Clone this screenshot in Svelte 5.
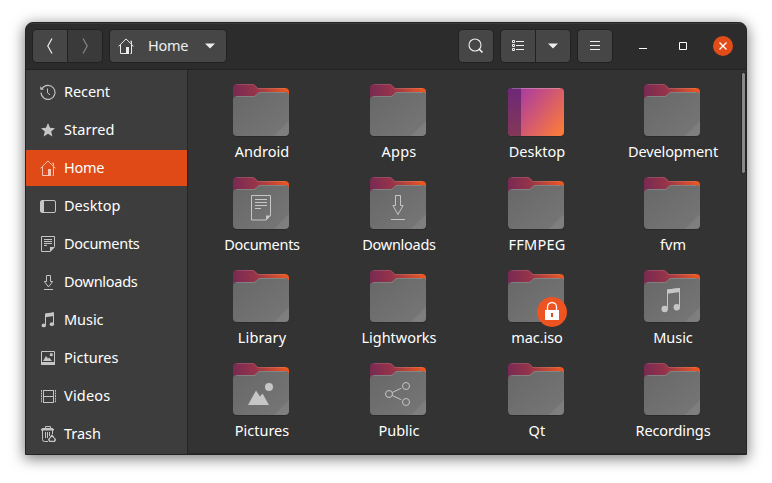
<script>
  const places = [
    { name: 'Recent', w: 46 },
    { name: 'Starred', w: 50.5 },
    { name: 'Home', w: 40 },
    { name: 'Desktop', w: 56.5 },
    { name: 'Documents', w: 75.5 },
    { name: 'Downloads', w: 73.5 },
    { name: 'Music', w: 39.5 },
    { name: 'Pictures', w: 54.5 },
    { name: 'Videos', w: 46.5 },
    { name: 'Trash', w: 37 }
  ];

  const folders = [
    { name: 'Android', w: 54.5 },
    { name: 'Apps', w: 35 },
    { name: 'Desktop', w: 56.5 },
    { name: 'Development', w: 90 },
    { name: 'Documents', w: 75.5 },
    { name: 'Downloads', w: 73.5 },
    { name: 'FFMPEG', w: 57 },
    { name: 'fvm', w: 26 },
    { name: 'Library', w: 48.5 },
    { name: 'Lightworks', w: 75 },
    { name: 'mac.iso', w: 51.5 },
    { name: 'Music', w: 39.5 },
    { name: 'Pictures', w: 54.5 },
    { name: 'Public', w: 41 },
    { name: 'Qt', w: 17 },
    { name: 'Recordings', w: 75 }
  ];

  // Tracks a label so that it takes up the given width.
  function fit(node, width) {
    const natural = node.getBoundingClientRect().width;
    const gap = (width - natural) / node.textContent.length;
    node.style.letterSpacing = gap.toFixed(3) + 'px';
  }
</script>

{#snippet house()}
  <svg class="icon" width="16" height="16" viewBox="0 0 16 16" fill="none" stroke="currentColor">
    <path d="M.5 8.4 8 .9l7.5 7.5M2.5 7v8.5h8M13.5 7v8.5h-1M13.5 5.8V3.2h-1.2" />
    <path d="M8 9h3v7H8z" fill="currentColor" stroke="none" />
  </svg>
{/snippet}

{#snippet placeIcon(name)}
  {#if name === 'Home'}
    {@render house()}
  {:else}
    <svg class="icon" width="16" height="16" viewBox="0 0 16 16" fill="none" stroke="currentColor">
      {#if name === 'Recent'}
        <path d="M2.1 4.6A7 7 0 1 1 1 8.6" stroke-width="1.1" />
        <path d="M.3 2.2v3.5h3.6z" fill="currentColor" stroke="none" />
        <path d="M7.5 4.500v4.300l2.500 2" />
      {:else if name === 'Starred'}
        <path d="m8 1 2 4.800 5 .4-3.800 3.300 1.200 5L8 11.800l-4.400 2.700 1.200-5L1 6.200l5-.4z" fill="currentColor" stroke="none" />
      {:else if name === 'Desktop'}
        <rect x=".5" y="2.5" width="15" height="12" rx="1.5" />
        <path d="M1 3h3v11H1z" fill="currentColor" stroke="none" />
      {:else if name === 'Documents'}
        <path d="M1.5.5h13v10l-4.500 5H1.500zM4 3.500h8M4 5.500h8M4 7.500h8M4 9.500h3" />
        <path d="M10 11h5l-5 5z" fill="currentColor" stroke="none" />
      {:else if name === 'Downloads'}
        <path d="M6.500 1.500h4v6h2.100L8.500 13 4.400 7.500h2.100zM4 15.500h9" />
      {:else if name === 'Music'}
        <path d="M5.500 13V2l8-1.200v11" />
        <path d="M5 1.700 14 .4V4L5 5.200z" fill="currentColor" stroke="none" />
        <ellipse cx="3.800" cy="13.400" rx="2.200" ry="1.900" fill="currentColor" stroke="none" />
        <ellipse cx="11.900" cy="12.200" rx="2.200" ry="1.900" fill="currentColor" stroke="none" />
      {:else if name === 'Pictures'}
        <path d="M1.500 1.500h13v13h-13z" />
        <path d="M1 12h14v3H1zM3 11l3-5 2 2.500 1.200-1L12 11z" fill="currentColor" stroke="none" />
        <circle cx="11.300" cy="4.700" r="1.600" fill="currentColor" stroke="none" />
      {:else if name === 'Videos'}
        <path d="M3.500 2v13M13.500 2v13M3.500 2.500h10M3.500 8.500h10M3.500 14.500h10" />
        <path d="M1.500 2v13M15.500 2v13" stroke-dasharray="1.800 .8" />
      {:else}
        <path d="M5.500 2.500v-2h5v2" />
        <path d="M1 4.500h13V3.300L12.500 2h-10L1 3.300z" fill="currentColor" stroke="none" />
        <path d="M2.500 4v9.500q0 2 2 2H8M12.500 4v4M5.500 6v6M7.500 6v6M9.500 6v4" />
        <path d="m9.700 12-.9 1.800 1 1.600h4.600l1-1.600-1-1.800M10 11.800l2-2.500 2 2.500" stroke-width="1.400" />
      {/if}
    </svg>
  {/if}
{/snippet}

{#snippet folderArt(name)}
  <svg class="folder" width="56" height="53" viewBox="0 0 56 53">
    {#if name === 'Desktop'}
      <rect y="5" width="56" height="48" rx="4" fill="#1f1f1f" opacity=".35" />
      <rect y="4" width="56" height="48" rx="4" fill="url(#desk)" />
      <path d="M13 4H4a4 4 0 0 0-4 4v40a4 4 0 0 0 4 4h9z" fill="url(#dock)" />
      <path d="M4 4.500h48" stroke="#fff" opacity=".25" />
    {:else}
      <path d="M0 12h56v37a4 4 0 0 1-4 4H4a4 4 0 0 1-4-4z" fill="#1f1f1f" opacity=".4" />
      <path d="M4 0h15.500q1.500 0 2.400 1L25 4h27a4 4 0 0 1 4 4v20H0V4a4 4 0 0 1 4-4z" fill="url(#back)" />
      <path d="M3.500.5h16q1.200 0 2 .8l3.300 3.200H52" fill="none" stroke="#fff" opacity=".13" />
      <path d="M4 12h16.500q1.300 0 2.200-.9l2.200-2.200q.9-.9 2.200-.9H52a4 4 0 0 1 4 4v36a4 4 0 0 1-4 4H4a4 4 0 0 1-4-4V16a4 4 0 0 1 4-4z" fill="url(#front)" />
      <path d="M3.500 12.500h17q1.500 0 2.500-1l2.100-2.100q.9-.9 2.200-.9H52.500" fill="none" stroke="#fff" opacity=".16" />
      <path d="M56 37v11a4 4 0 0 1-4 4H41z" fill="#fff" opacity=".07" />
      <g fill="none" stroke="#c6c6c6">
        {#if name === 'Documents'}
          <path d="M18.500 18.500h19v20l-4.500 4.500H18.500zM22 22.500h12M22 25.500h12M22 28.500h12M22 31.500h6" />
          <path d="M33 38.500h5l-5 5z" fill="#c6c6c6" stroke="none" />
        {:else if name === 'Downloads'}
          <path d="M25.500 18.500h5v10h2.600L28 37.500l-5.100-9h2.600zM21 42.500h14" />
        {:else if name === 'Music'}
          <path d="M23.500 39V20l12-1.500v18" />
          <path d="m23 19.500 13-1.600v4.200l-13 1.700z" fill="#c6c6c6" stroke="none" />
          <circle cx="20.700" cy="39" r="3.200" fill="#c6c6c6" stroke="none" />
          <circle cx="32.800" cy="37.200" r="3.200" fill="#c6c6c6" stroke="none" />
        {:else if name === 'Pictures'}
          <path d="m15 42 8-14.500 4 6 2.500-3L36 42z" fill="#c6c6c6" stroke="none" />
          <circle cx="36" cy="24" r="4" fill="#c6c6c6" stroke="none" />
        {:else if name === 'Public'}
          <circle cx="19" cy="31" r="3.500" />
          <circle cx="36" cy="23" r="3.500" />
          <circle cx="36" cy="39" r="3.500" />
          <path d="m22.200 29.500 9-4.200M22.200 32.500l9 4.200" />
        {/if}
      </g>
    {/if}
  </svg>
{/snippet}

<svg class="defs" width="0" height="0">
  <defs>
    <linearGradient id="back" gradientUnits="userSpaceOnUse" x1="0" y1="14" x2="56" y2="6">
      <stop offset="0" stop-color="#772953" />
      <stop offset=".4" stop-color="#96344a" />
      <stop offset="1" stop-color="#f0591f" />
    </linearGradient>
    <linearGradient id="front" x1="0" y1="0" x2="1" y2="1">
      <stop offset="0" stop-color="#676767" />
      <stop offset="1" stop-color="#777" />
    </linearGradient>
    <linearGradient id="desk" gradientUnits="userSpaceOnUse" x1="9" y1="6" x2="56" y2="44">
      <stop offset="0" stop-color="#a53aa4" />
      <stop offset=".5" stop-color="#d15872" />
      <stop offset="1" stop-color="#f97a3c" />
    </linearGradient>
    <linearGradient id="dock" gradientUnits="userSpaceOnUse" x1="0" y1="4" x2="0" y2="52">
      <stop offset="0" stop-color="#6d2878" />
      <stop offset="1" stop-color="#833857" />
    </linearGradient>
  </defs>
</svg>

<div class="desktop">
  <div class="window">
    <header>
      <div class="group">
        <button aria-label="Back">
          <svg width="8" height="18" viewBox="0 0 8 18" fill="none" stroke="currentColor" stroke-width="1.200"><path d="M6 1.500 1.800 9 6 16.500" /></svg>
        </button>
        <button class="off" aria-label="Forward">
          <svg width="8" height="18" viewBox="0 0 8 18" fill="none" stroke="currentColor" stroke-width="1.200"><path d="M2 1.500 6.200 9 2 16.500" /></svg>
        </button>
      </div>
      <div class="group path">
        <button>
          {@render house()}
          <span class="where"><span use:fit={40}>Home</span></span>
          <svg width="10" height="6" viewBox="0 0 10 6" fill="currentColor"><path d="M0 .500h10L5 5.500z" /></svg>
        </button>
      </div>
      <div class="space"></div>
      <div class="group">
        <button aria-label="Search">
          <svg width="16" height="16" viewBox="0 0 16 16" fill="none" stroke="currentColor"><circle cx="7" cy="7" r="6" stroke-width="1.100" /><path d="m11 11 3.500 3.500" stroke-width="1.700" /></svg>
        </button>
      </div>
      <div class="group views">
        <button aria-label="List view">
          <svg width="12" height="12" viewBox="0 0 12 12" fill="none" stroke="currentColor"><path d="M.500.500h2v2h-2zM.500 4.500h2v2h-2zM.500 8.500h2v2h-2zM4 1.500h8M4 5.500h8M4 9.500h8" /></svg>
        </button>
        <button aria-label="View options">
          <svg width="10" height="6" viewBox="0 0 10 6" fill="currentColor"><path d="M0 .500h10L5 5.500z" /></svg>
        </button>
      </div>
      <div class="group menu">
        <button aria-label="Menu">
          <svg width="10" height="10" viewBox="0 0 10 10" stroke="currentColor"><path d="M0 .500h10M0 4.500h10M0 8.500h10" /></svg>
        </button>
      </div>
      <div class="controls">
        <svg width="8" height="8" viewBox="0 0 8 8" stroke="#fff"><path d="M0 6.500h8" /></svg>
        <svg width="8" height="8" viewBox="0 0 8 8" fill="none" stroke="#fff"><path d="M.500.500h7v7h-7z" /></svg>
        <svg width="20" height="20" viewBox="0 0 20 20"><circle cx="10" cy="10" r="10" fill="#e24c18" /><path d="m6.500 6.500 7 7m0-7-7 7" stroke="#fff" stroke-width="1.300" /></svg>
      </div>
    </header>
    <main>
      <nav>
        {#each places as place}
          <div class="place" class:active={place.name === 'Home'}>
            {@render placeIcon(place.name)}
            <span class="label" use:fit={place.w}>{place.name}</span>
          </div>
        {/each}
      </nav>
      <section>
        {#each folders as folder}
          <div class="item">
            <div class="art">
              {@render folderArt(folder.name)}
              {#if folder.name === 'mac.iso'}
                <svg class="lock" width="30" height="30" viewBox="0 0 30 30">
                  <circle cx="15" cy="15" r="15" fill="#ee5421" />
                  <path d="M10.500 14V10a4.500 4.500 0 0 1 9 0v4" fill="none" stroke="#fff" stroke-width="1.300" />
                  <path d="M8 13h14v10H8z" fill="#fff" />
                  <path d="M14 16h2v4h-2z" fill="#d94b1d" />
                </svg>
              {/if}
            </div>
            <div class="name"><span use:fit={folder.w}>{folder.name}</span></div>
          </div>
        {/each}
        <div class="thumb"></div>
      </section>
    </main>
  </div>
</div>

<style>
  :global(body) {
    background: #fff;
    overflow: hidden;
  }
  .defs {
    display: block;
  }
  .desktop {
    box-sizing: border-box;
    width: 772px;
    height: 483px;
    padding: 22px 25px 28px;
    font: 14.5px/20px 'Noto Sans', 'Open Sans', sans-serif;
    color: #fff;
  }
  .window {
    box-sizing: border-box;
    display: flex;
    flex-direction: column;
    width: 722px;
    height: 433px;
    border: 1px solid #242424;
    border-radius: 8px 8px 0 0;
    background: #333;
    overflow: hidden;
    box-shadow: 0 3px 14px 1px rgba(0, 0, 0, 0.5);
  }
  header {
    box-sizing: border-box;
    flex: none;
    display: flex;
    height: 47px;
    padding: 6px 13px 0 6px;
    background: #2c2c2c;
    border-bottom: 1px solid #222;
    box-shadow: inset 0 1px #3b3b3b;
  }
  .group {
    box-sizing: border-box;
    display: flex;
    height: 34px;
    border: 1px solid #212121;
    border-radius: 5px;
    overflow: hidden;
  }
  button {
    display: flex;
    align-items: center;
    justify-content: center;
    width: 34px;
    height: 32px;
    padding: 0;
    border: 0;
    background: #464646;
    color: #eee;
    font: inherit;
  }
  button + button {
    border-left: 1px solid #212121;
    width: 35px;
  }
  .off {
    background: #3a3a3a;
    color: #858585;
  }
  .path {
    margin-left: 6px;
  }
  .path button {
    box-sizing: border-box;
    width: 116px;
    justify-content: flex-start;
    padding-left: 8px;
  }
  .where {
    width: 57px;
    margin-left: 14px;
    padding-bottom: 2px;
  }
  .where,
  .name {
    white-space: nowrap;
  }
  .where span {
    float: left;
  }
  .space {
    flex: 1;
  }
  .views,
  .menu {
    margin-left: 6px;
  }
  .controls {
    display: flex;
    align-items: center;
    height: 34px;
    margin-left: 26px;
    gap: 32px;
  }
  .controls svg:last-child {
    margin-left: -6px;
  }
  main {
    display: flex;
    flex: 1;
    min-height: 0;
  }
  nav {
    box-sizing: border-box;
    display: flex;
    flex-direction: column;
    gap: 2px;
    flex: none;
    width: 162px;
    padding-top: 4px;
    background: #3d3d3d;
    border-right: 1px solid #252525;
  }
  .place {
    display: flex;
    align-items: center;
    flex: none;
    height: 36px;
    padding-left: 14px;
    gap: 8px;
  }
  .label {
    padding-bottom: 2px;
  }
  .icon {
    flex: none;
  }
  .place .icon {
    color: #c5c5c5;
  }
  .active {
    background: #df4a16;
  }
  .active .icon {
    color: #f6c5b5;
  }
  section {
    box-sizing: border-box;
    position: relative;
    flex: 1;
    display: grid;
    grid-template-columns: 136px 138px 138px 134px;
    grid-auto-rows: 93px;
    padding: 14px 0 0 5px;
    box-shadow: inset 0 -1px #292929;
  }
  .item {
    display: flex;
    flex-direction: column;
    align-items: center;
  }
  .art {
    position: relative;
    height: 57px;
  }
  .folder {
    display: block;
  }
  .lock {
    position: absolute;
    left: 29px;
    top: 27px;
  }
  .name {
    padding-left: 2px;
  }
  .thumb {
    position: absolute;
    top: 2px;
    right: 0;
    width: 3px;
    height: 100px;
    border-radius: 3px;
    background: #888;
    border: 1px solid #222;
  }
</style>
